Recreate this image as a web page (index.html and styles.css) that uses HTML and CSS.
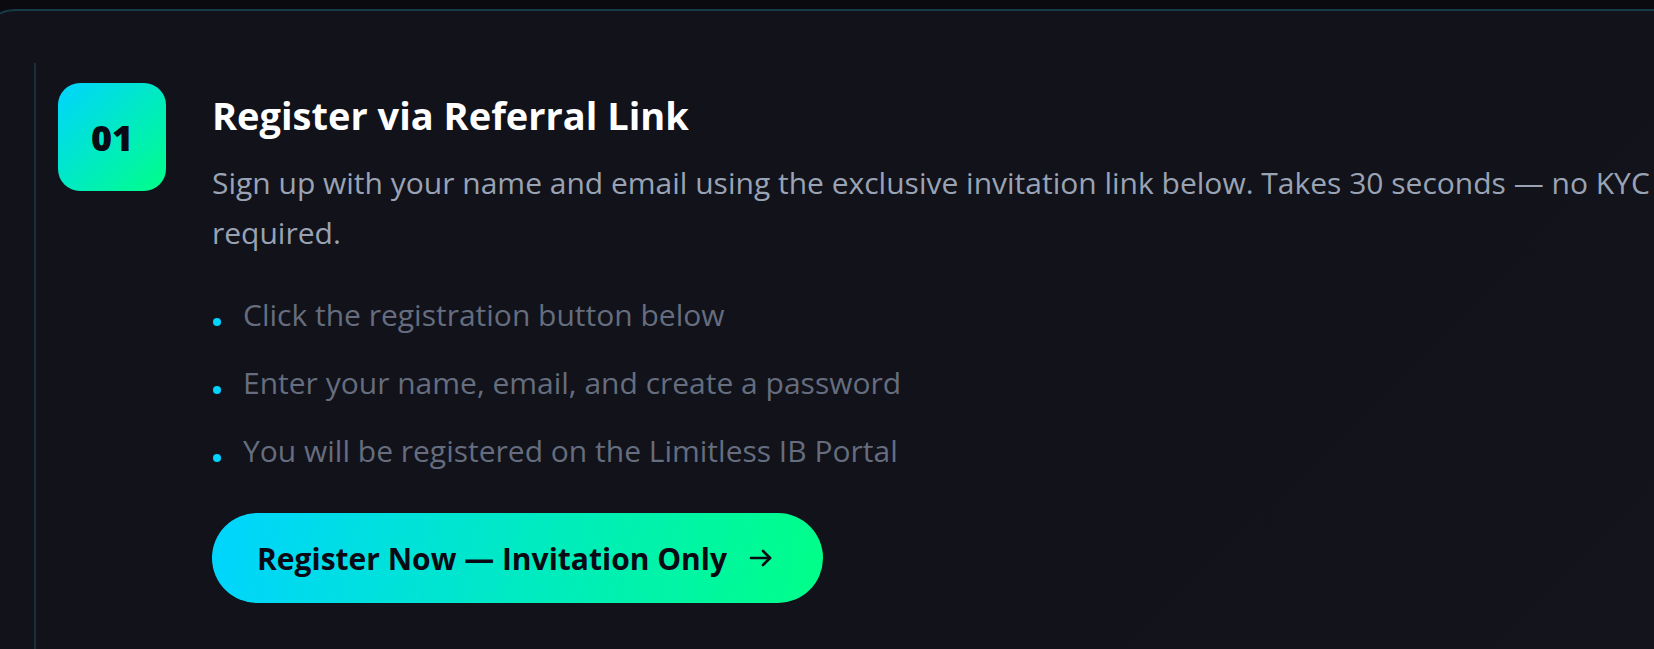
FILE: index.html
```html
<!DOCTYPE html>
<html lang="en">
<head>
<meta charset="utf-8">
<title>Register via Referral Link</title>
<link rel="stylesheet" href="styles.css">
</head>
<body>
<main class="page">
  <section class="card">
    <div class="step">
      <div class="step-badge">01</div>
      <div class="step-body">
        <h2 class="step-title">Register via Referral Link</h2>
        <p class="step-desc">Sign up with your name and email using the exclusive invitation link below. Takes 30 seconds — no KYC required.</p>
        <ul class="step-list">
          <li class="step-item">Click the registration button below</li>
          <li class="step-item">Enter your name, email, and create a password</li>
          <li class="step-item">You will be registered on the Limitless IB Portal</li>
        </ul>
        <a class="cta" href="#">
          <span class="cta-label">Register Now — Invitation Only</span>
          <svg class="cta-arrow" width="24" height="24" viewBox="0 0 24 24" fill="none" stroke="currentColor" stroke-width="2.6" stroke-linecap="round" stroke-linejoin="round" aria-hidden="true">
            <path d="M2 12h19"/>
            <path d="M14 5l7 7-7 7"/>
          </svg>
        </a>
      </div>
    </div>
  </section>
</main>
</body>
</html>
```

FILE: styles.css
```css
* { box-sizing: border-box; }

html, body {
  margin: 0;
  padding: 0;
  height: 100%;
  background: #0a0a0f;
  overflow: hidden;
}

body {
  font-family: "Open Sans", "Noto Sans", "Liberation Sans", sans-serif;
  color: #ffffff;
}

.page {
  padding-top: 9px;
}

.card {
  margin-left: -24px;
  width: 1740px;
  height: 700px;
  border: 2px solid #173a47;
  border-radius: 40px;
  background: linear-gradient(135deg, #12121b 0%, #11121a 60%, #13141c 100%);
  padding: 52px 0 0 56px;
}

.step {
  display: flex;
  gap: 46px;
  border-left: 2px solid #15313c;
  padding: 20px 0 0 22px;
  height: 640px;
}

.step-badge {
  flex: 0 0 108px;
  width: 108px;
  height: 108px;
  border-radius: 22px;
  background: linear-gradient(135deg, #00d4ff 0%, #00ff88 100%);
  display: flex;
  align-items: center;
  justify-content: center;
  font-size: 36px;
  font-weight: 800;
  color: #0a0a14;
}

.step-body {
  width: 1440px;
}

.step-title {
  margin: 8px 0 0;
  font-size: 38px;
  line-height: 48px;
  font-weight: 700;
  color: #ffffff;
}

.step-desc {
  margin: 19px 0 0;
  font-size: 30px;
  line-height: 50px;
  color: #9aa3b4;
}

.step-list {
  list-style: none;
  margin: 23px 0 0;
  padding: 0;
}

.step-item {
  position: relative;
  padding-left: 31px;
  font-size: 30px;
  line-height: 68px;
  color: #656d7e;
}

.step-item::before {
  content: "";
  position: absolute;
  left: 1px;
  top: 37px;
  width: 8px;
  height: 8px;
  border-radius: 50%;
  background: #00d4ff;
}

.cta {
  display: flex;
  width: fit-content;
  align-items: center;
  gap: 22px;
  margin-top: 28px;
  height: 90px;
  padding: 0 50px 0 45px;
  border-radius: 45px;
  background: linear-gradient(100deg, #00d4ff 0%, #00ff88 100%);
  color: #0a0a14;
  text-decoration: none;
  font-size: 30px;
  font-weight: 700;
}

.cta-arrow {
  flex: 0 0 auto;
}
```
